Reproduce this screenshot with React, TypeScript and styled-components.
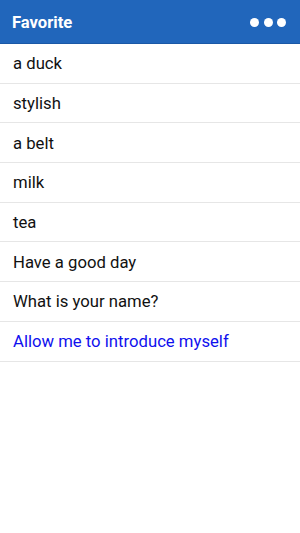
import React from "react";
import styled, { createGlobalStyle } from "styled-components";

const Global = createGlobalStyle`
  html, body { margin: 0; padding: 0; background: #ffffff; }
  body { font-family: Roboto, "Noto Sans", sans-serif; }
`;

const Page = styled.div`
  width: 300px;
  min-height: 533px;
  background: #ffffff;
  display: flex;
  flex-direction: column;
`;

const Header = styled.header`
  height: 44px;
  box-sizing: border-box;
  background: #2166bb;
  border-bottom: 1px solid #1a58a6;
  display: flex;
  align-items: center;
  justify-content: space-between;
  padding: 1px 14px 0 12px;
`;

const Title = styled.h1`
  margin: 0;
  font-size: 16.6px;
  font-weight: 700;
  color: #ffffff;
`;

const Dots = styled.div`
  display: flex;
  gap: 4.5px;
  align-items: center;
`;

const Dot = styled.span`
  width: 9px;
  height: 9px;
  border-radius: 50%;
  background: #ffffff;
`;

const List = styled.ul`
  list-style: none;
  margin: 0;
  padding: 0;
`;

const Row = styled.li<{ $link?: boolean }>`
  height: 39.7px;
  box-sizing: border-box;
  display: flex;
  align-items: center;
  padding: 1px 13px 0;
  border-bottom: 1px solid #e6e6e6;
  font-size: 16.7px;
  color: ${(p) => (p.$link ? "#1010ee" : "#111111")};
`;

const items = [
  "a duck",
  "stylish",
  "a belt",
  "milk",
  "tea",
  "Have a good day",
  "What is your name?",
];

export default function App() {
  return (
    <Page>
      <Global />
      <Header>
        <Title>Favorite</Title>
        <Dots>
          <Dot />
          <Dot />
          <Dot />
        </Dots>
      </Header>
      <List>
        {items.map((t) => (
          <Row key={t}>{t}</Row>
        ))}
        <Row $link>Allow me to introduce myself</Row>
      </List>
    </Page>
  );
}
